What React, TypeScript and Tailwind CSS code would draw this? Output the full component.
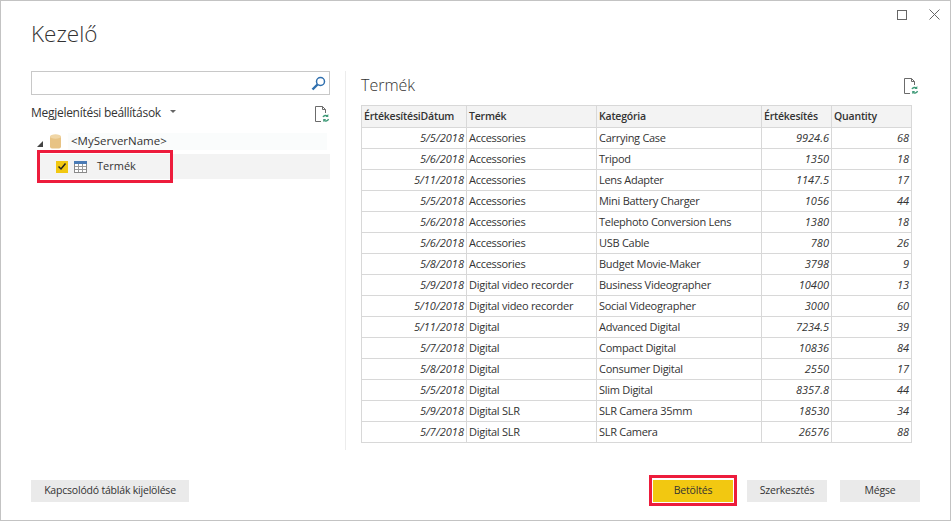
const FONT = "font-['Open_Sans','Noto_Sans',sans-serif]";

interface Row {
  date: string;
  product: string;
  category: string;
  sales: string;
  qty: string;
}

const ROWS: Row[] = [
  { date: '5/5/2018', product: 'Accessories', category: 'Carrying Case', sales: '9924.6', qty: '68' },
  { date: '5/6/2018', product: 'Accessories', category: 'Tripod', sales: '1350', qty: '18' },
  { date: '5/11/2018', product: 'Accessories', category: 'Lens Adapter', sales: '1147.5', qty: '17' },
  { date: '5/5/2018', product: 'Accessories', category: 'Mini Battery Charger', sales: '1056', qty: '44' },
  { date: '5/6/2018', product: 'Accessories', category: 'Telephoto Conversion Lens', sales: '1380', qty: '18' },
  { date: '5/6/2018', product: 'Accessories', category: 'USB Cable', sales: '780', qty: '26' },
  { date: '5/8/2018', product: 'Accessories', category: 'Budget Movie-Maker', sales: '3798', qty: '9' },
  { date: '5/9/2018', product: 'Digital video recorder', category: 'Business Videographer', sales: '10400', qty: '13' },
  { date: '5/10/2018', product: 'Digital video recorder', category: 'Social Videographer', sales: '3000', qty: '60' },
  { date: '5/11/2018', product: 'Digital', category: 'Advanced Digital', sales: '7234.5', qty: '39' },
  { date: '5/7/2018', product: 'Digital', category: 'Compact Digital', sales: '10836', qty: '84' },
  { date: '5/8/2018', product: 'Digital', category: 'Consumer Digital', sales: '2550', qty: '17' },
  { date: '5/5/2018', product: 'Digital', category: 'Slim Digital', sales: '8357.8', qty: '44' },
  { date: '5/9/2018', product: 'Digital SLR', category: 'SLR Camera 35mm', sales: '18530', qty: '34' },
  { date: '5/7/2018', product: 'Digital SLR', category: 'SLR Camera', sales: '26576', qty: '88' },
];

function RefreshDoc() {
  return (
    <svg width="16" height="17" viewBox="0 0 16 17" fill="none">
      <path d="M1.5 .5H8.5L11.5 3.5V7M8.5 .5V3.5H11.5M1.5 .5V15.5H7" stroke="#6b6b6b" />
      <path d="M9 11A3 3 0 0 1 13.5 10M14.5 13A3 3 0 0 1 10 14.5" stroke="#3f9a78" strokeWidth="1.4" />
      <path d="M14.3 8V11H11.3M9.2 16V13H12.2" fill="#3f9a78" />
    </svg>
  );
}

function Button({ label, w, primary }: { label: string; w: string; primary?: boolean }) {
  return (
    <button
      className={`block h-[22px] ${w} text-[10.5px] tracking-[-0.2px] text-[#333] ${primary ? 'bg-[#f2c811]' : 'bg-[#eaeaea]'}`}
    >
      {label}
    </button>
  );
}

export default function App() {
  return (
    <div className={`${FONT} relative flex h-[521px] w-[951px] flex-col border border-[#c3c3c3] bg-white text-[#333]`}>
      {/* Window controls */}
      <div className="absolute right-[10px] top-[8px] flex items-center gap-[22px]">
        <div className="h-[10px] w-[10px] border border-[#666]" />
        <svg width="11" height="11" viewBox="0 0 11 11" stroke="#666" strokeWidth="1">
          <path d="M.5 .5L10.5 10.5M10.5 .5L.5 10.5" />
        </svg>
      </div>

      <h1 className="ml-[30px] mt-[17px] h-[53px] text-[22.5px] font-light leading-[32px] text-[#333]">Kezelő</h1>

      <div className="flex h-[379px]">
        {/* Navigator */}
        <div className="ml-[30px] w-[299px]">
          <div className="flex h-[24px] items-center justify-end border border-[#c8c8c8] pr-[2px]">
            <svg width="17" height="17" viewBox="0 0 17 17" fill="none" stroke="#2f6fae">
              <circle cx="10.5" cy="6.5" r="4" strokeWidth="1.5" />
              <path d="M7.5 9.5L2.5 14.5" strokeWidth="2.4" />
            </svg>
          </div>
          <div className="mt-[8px] flex h-[20px] items-center justify-between">
            <div className="flex items-center text-[12px] tracking-[-0.28px]">
              Megjelenítési beállítások
              <span className="ml-[9px] mt-[-3px] h-0 w-0 border-x-[3px] border-t-[3px] border-x-transparent border-t-[#666]" />
            </div>
            <div className="mt-[2px]">
              <RefreshDoc />
            </div>
          </div>

          {/* Tree */}
          <div className="mt-[8px] flex h-[21px] items-center">
            <span className="ml-[6px] mt-[4px] h-0 w-0 border-b-[6px] border-l-[6px] border-b-[#444] border-l-transparent" />
            <svg className="ml-[7px]" width="11" height="15" viewBox="0 0 11 15">
              <rect y="1.5" width="11" height="13" rx="2" fill="#e8c384" />
              <ellipse cx="5.5" cy="2.5" rx="5.5" ry="2.2" fill="#f0d6a6" />
            </svg>
            <div className="ml-[7px] h-[17px] w-[259px] bg-[#fafcfc] pl-[3px] text-[11.5px] leading-[16px]">
              {'<MyServerName>'}
            </div>
          </div>
          <div className="relative ml-[6px] mt-[2px] flex h-[25px] items-center bg-[#f3f3f3]">
            <div className="ml-[19px] flex h-[12px] w-[12px] items-center justify-center bg-[#f2c811]">
              <svg width="10" height="9" viewBox="0 0 10 9" fill="none" stroke="#222" strokeWidth="1.5">
                <path d="M1.5 4.5L4 7L8.5 1.5" />
              </svg>
            </div>
            <svg className="ml-[6px]" width="13" height="12" viewBox="0 0 13 12">
              <rect x=".5" y=".5" width="12" height="11" fill="#fff" stroke="#8a8a8a" />
              <rect width="13" height="3" fill="#4a7bb5" />
              <path d="M4.5 3V11M8.5 3V11M1 5.5H12M1 8.5H12" stroke="#9a9a9a" />
            </svg>
            <span className="ml-[10px] text-[11px]">Termék</span>
            {/* Red highlight */}
            <div className="absolute left-0 top-[-4px] h-[33px] w-[136px] border-[3px] border-[#ed1c3c]" />
          </div>
        </div>

        <div className="ml-[15px] w-px bg-[#ececec]" />

        {/* Preview */}
        <div className="ml-[15px] w-[550px]">
          <div className="flex h-[34px] items-start justify-between">
            <h2 className="text-[16px] font-light leading-[28px]">Termék</h2>
            <div className="mr-[-8px] mt-[7px]">
              <RefreshDoc />
            </div>
          </div>
          <table className="w-[550px] table-fixed border-collapse text-[11px]">
            <colgroup>
              <col className="w-[105px]" />
              <col className="w-[130px]" />
              <col className="w-[165px]" />
              <col className="w-[70px]" />
              <col className="w-[80px]" />
            </colgroup>
            <thead>
              <tr className="h-[22px] bg-[#f3f3f3] text-left">
                {['ÉrtékesítésiDátum', 'Termék', 'Kategória', 'Értékesítés', 'Quantity'].map((h) => (
                  <th key={h} className="overflow-hidden whitespace-nowrap border border-[#d8d8d8] px-[2px] text-[10.5px] font-semibold tracking-[-0.2px]">
                    {h}
                  </th>
                ))}
              </tr>
            </thead>
            <tbody>
              {ROWS.map((r, i) => (
                <tr key={i} className="h-[21px]">
                  <td className="border border-[#d8d8d8] px-[2px] text-right italic">{r.date}</td>
                  <td className="whitespace-nowrap border border-[#d8d8d8] px-[2px] tracking-[-0.28px]">{r.product}</td>
                  <td className="whitespace-nowrap border border-[#d8d8d8] px-[2px] tracking-[-0.28px]">{r.category}</td>
                  <td className="border border-[#d8d8d8] px-[2px] text-right italic">{r.sales}</td>
                  <td className="border border-[#d8d8d8] px-[2px] text-right italic">{r.qty}</td>
                </tr>
              ))}
            </tbody>
          </table>
        </div>
      </div>

      {/* Footer */}
      <div className="mt-[30px] flex items-center pl-[30px]">
        <Button label="Kapcsolódó táblák kijelölése" w="w-[158px]" />
        <div className="relative ml-[464px]">
          <Button label="Betöltés" w="w-[80px]" primary />
          <div className="absolute left-[-4px] top-[-5px] h-[31px] w-[88px] border-[3px] border-[#ed1c3c]" />
        </div>
        <div className="ml-[14px]">
          <Button label="Szerkesztés" w="w-[80px]" />
        </div>
        <div className="ml-[13px]">
          <Button label="Mégse" w="w-[80px]" />
        </div>
      </div>
    </div>
  );
}
